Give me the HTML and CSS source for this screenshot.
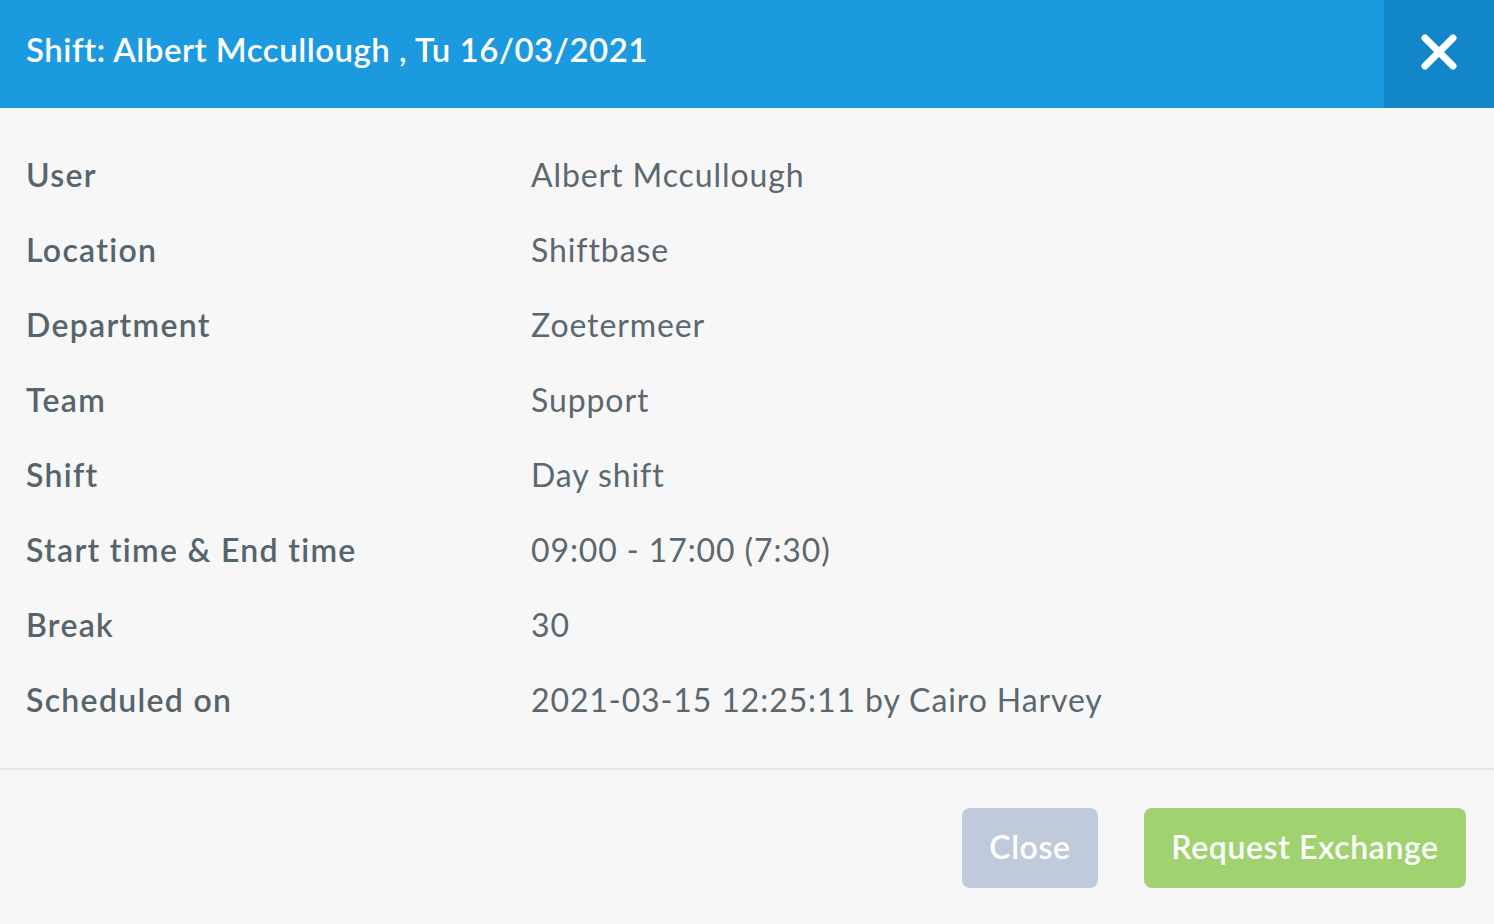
FILE: index.html
```html
<!DOCTYPE html>
<html>
<head>
<meta charset="utf-8">
<link rel="stylesheet" href="styles.css">
</head>
<body>
<div class="modal">
  <header class="modal-header">
    <h1 class="modal-title">Shift: Albert Mccullough , Tu 16/03/2021</h1>
    <button class="modal-x" aria-label="Close">
      <svg width="38" height="38" viewBox="0 0 38 38"><path d="M5 5 L33 33 M33 5 L5 33" stroke="#fff" stroke-width="7" stroke-linecap="round" fill="none"/></svg>
    </button>
  </header>
  <div class="modal-body">
    <div class="row"><div class="label">User</div><div class="value">Albert Mccullough</div></div>
    <div class="row"><div class="label">Location</div><div class="value">Shiftbase</div></div>
    <div class="row"><div class="label">Department</div><div class="value">Zoetermeer</div></div>
    <div class="row"><div class="label">Team</div><div class="value">Support</div></div>
    <div class="row"><div class="label">Shift</div><div class="value">Day shift</div></div>
    <div class="row"><div class="label">Start time &amp; End time</div><div class="value">09:00 - 17:00 (7:30)</div></div>
    <div class="row"><div class="label">Break</div><div class="value">30</div></div>
    <div class="row"><div class="label">Scheduled on</div><div class="value">2021-03-15 12:25:11 by Cairo Harvey</div></div>
  </div>
  <footer class="modal-footer">
    <button class="btn btn-close">Close</button>
    <button class="btn btn-primary">Request Exchange</button>
  </footer>
</div>
</body>
</html>
```

FILE: styles.css
```css
* { box-sizing: border-box; }
html, body { margin: 0; padding: 0; }
body {
  background: #f7f7f7;
  font-family: "Lato", "Liberation Sans", sans-serif;
  width: 1494px;
  height: 924px;
  overflow: hidden;
}
.modal { display: flex; flex-direction: column; height: 924px; }
.modal-header {
  height: 108px;
  background: #1b9ae0;
  display: flex;
  align-items: center;
  justify-content: space-between;
}
.modal-title {
  margin: 0 0 10px 26px;
  color: #fff;
  font-size: 33px;
  font-weight: 600;
  letter-spacing: 0.5px;
}
.modal-x {
  width: 110px;
  height: 108px;
  border: 0;
  padding: 0;
  background: #1187c9;
  display: flex;
  align-items: center;
  justify-content: center;
  cursor: pointer;
}
.modal-x svg { margin-top: -4px; }
.modal-body {
  padding: 30px 26px 30px 26px;
  border-bottom: 2px solid #e4e4e4;
}
.row {
  display: flex;
  height: 75px;
  align-items: center;
  font-size: 32px;
}
.label {
  width: 505px;
  color: #56646c;
  font-weight: 600;
  letter-spacing: 1.3px;
  margin-top: -2px;
}
.value {
  color: #5b6870;
  font-weight: 400;
  letter-spacing: 0.9px;
  margin-top: -2px;
}
.modal-footer {
  flex: 1;
  display: flex;
  justify-content: flex-end;
  align-items: flex-start;
  gap: 46px;
  padding: 38px 28px 0 0;
}
.btn {
  height: 80px;
  border: 0;
  border-radius: 8px;
  color: #fff;
  font-family: inherit;
  font-size: 32px;
  font-weight: 600;
  letter-spacing: 0.6px;
  padding: 0 10px 4px;
}
.btn-close { background: #bfcbdb; width: 136px; }
.btn-primary { background: #a0d36f; width: 322px; }
```
